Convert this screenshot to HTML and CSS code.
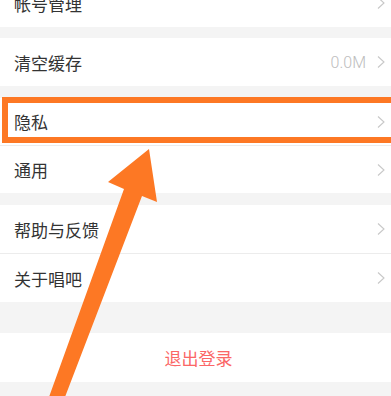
FILE: index.html
```html
<!DOCTYPE html>
<html lang="zh">
<head>
<meta charset="utf-8">
<link rel="stylesheet" href="styles.css">
</head>
<body>
<div class="page">
  <div class="group first">
    <div class="row"><span class="label">帐号管理</span><span class="right"><svg class="chev" viewBox="0 0 8 12"><polyline points="1,0.5 7,6 1,11.5"/></svg></span></div>
  </div>
  <div class="gap gap-s"></div>
  <div class="group">
    <div class="row"><span class="label">清空缓存</span><span class="right"><span class="value">0.0M</span><svg class="chev" viewBox="0 0 8 12"><polyline points="1,0.5 7,6 1,11.5"/></svg></span></div>
  </div>
  <div class="gap gap-m"></div>
  <div class="group">
    <div class="row compact divided"><span class="label">隐私</span><span class="right"><svg class="chev" viewBox="0 0 8 12"><polyline points="1,0.5 7,6 1,11.5"/></svg></span></div>
    <div class="row compact"><span class="label">通用</span><span class="right"><svg class="chev" viewBox="0 0 8 12"><polyline points="1,0.5 7,6 1,11.5"/></svg></span></div>
  </div>
  <div class="gap gap-m"></div>
  <div class="group">
    <div class="row divided"><span class="label">帮助与反馈</span><span class="right"><svg class="chev" viewBox="0 0 8 12"><polyline points="1,0.5 7,6 1,11.5"/></svg></span></div>
    <div class="row"><span class="label">关于唱吧</span><span class="right"><svg class="chev" viewBox="0 0 8 12"><polyline points="1,0.5 7,6 1,11.5"/></svg></span></div>
  </div>
  <div class="gap gap-l"></div>
  <div class="group">
    <div class="row logout"><span class="logout-text">退出登录</span></div>
  </div>

  <div class="highlight"></div>
  <svg class="arrow" viewBox="0 0 391 396" width="391" height="396">
    <polygon points="149,149 157,202 142,196 65,397 49,397 124,189 108,182"/>
  </svg>
</div>
</body>
</html>
```

FILE: styles.css
```css
html, body {
  margin: 0;
  padding: 0;
  background: #f4f4f4;
  overflow: hidden;
}
body {
  width: 391px;
  height: 396px;
  font-family: "Noto Sans CJK SC", "Noto Sans", sans-serif;
}
.page {
  position: relative;
  width: 391px;
  height: 396px;
  overflow: hidden;
}
.group {
  background: #fff;
}
.group.first {
  margin-top: -21px;
}
.row {
  height: 48px;
  display: flex;
  align-items: center;
  justify-content: space-between;
  padding: 0 6px 0 14px;
  box-sizing: border-box;
}
.row.compact {
  height: 47px;
}
.row.divided {
  border-bottom: 1px solid #ececec;
  height: 49px;
}
.row.compact.divided {
  height: 48px;
}
.label {
  font-size: 17px;
  color: #333;
  line-height: 1;
}
.right {
  display: flex;
  align-items: center;
  gap: 11px;
}
.value {
  font-size: 16px;
  color: #bdbdbd;
  font-family: "Roboto", "Noto Sans", sans-serif;
  font-weight: 300;
}
.chev {
  width: 8px;
  height: 12px;
  fill: none;
  stroke: #c8c8c8;
  stroke-width: 1.1;
}
.gap-s { height: 11px; }
.gap-m { height: 12px; }
.gap-l { height: 31px; }
.row.logout {
  justify-content: center;
  height: 49px;
  padding: 0;
}
.logout-text {
  font-size: 17px;
  color: #fb6666;
  margin-left: 6px;
}
.highlight {
  position: absolute;
  left: 2px;
  top: 97px;
  width: 400px;
  height: 46px;
  box-sizing: border-box;
  border: 6px solid #fd7824;
}
.arrow {
  position: absolute;
  left: 0;
  top: 0;
}
.arrow polygon {
  fill: #fd7824;
}
```
